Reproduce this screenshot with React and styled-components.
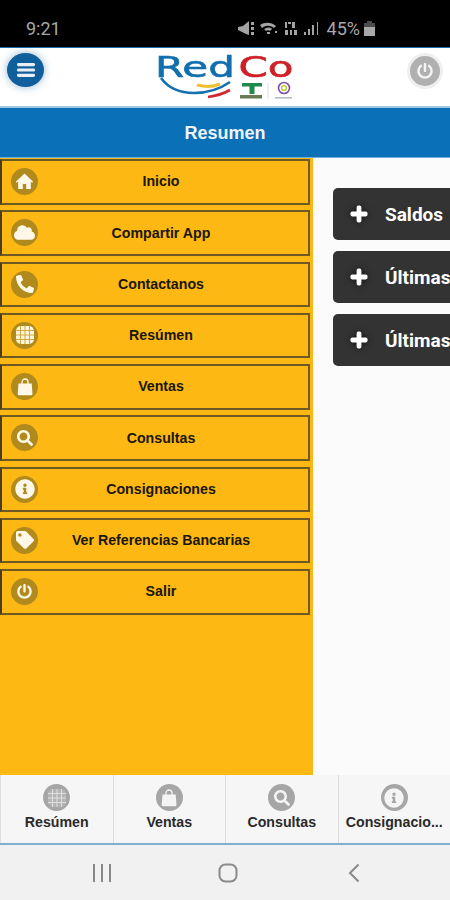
import React from 'react'
import styled, { createGlobalStyle } from 'styled-components'
import { FaCloud, FaPhone, FaSearch, FaInfoCircle, FaTag, FaPowerOff, FaPlus } from 'react-icons/fa'

const GridIcon = ({ cell, line }) => (
  <svg width="20" height="20" viewBox="0 0 20 20">
    <rect x="1" y="1" width="18" height="18" rx="5" fill={cell} />
    <path d="M5.5 1v18M10 1v18M14.5 1v18M1 5.5h18M1 10h18M1 14.5h18" stroke={line} strokeWidth="1" />
  </svg>
)

const HomeIcon = () => (
  <svg width="19" height="19" viewBox="0 0 18 18" fill="currentColor">
    <path d="M9 1.5L.8 9.2l1 1L3 9.2V16h4.4v-4.6h3.2V16H15V9.2l1.2 1 1-1z" />
  </svg>
)

const BagIcon = ({ size = 18 }) => (
  <svg width={size} height={size} viewBox="0 0 18 18" fill="currentColor">
    <path d="M2.5 5.5h13.2l.8 10.2a1.5 1.5 0 0 1-1.5 1.6H3.2a1.5 1.5 0 0 1-1.5-1.6z" />
    <path d="M6 7V4a3 3 0 0 1 6 0v3" fill="none" stroke="currentColor" strokeWidth="1.3" />
  </svg>
)

const menu = [
  { label: 'Inicio', icon: <HomeIcon /> },
  { label: 'Compartir App', icon: <FaCloud size={21} /> },
  { label: 'Contactanos', icon: <FaPhone size={18} style={{ transform: 'scaleX(-1)' }} /> },
  { label: 'Resúmen', icon: <GridIcon cell="#fff6dc" line="#cfa840" /> },
  { label: 'Ventas', icon: <BagIcon /> },
  { label: 'Consultas', icon: <FaSearch size={16} /> },
  { label: 'Consignaciones', icon: <FaInfoCircle size={20} /> },
  { label: 'Ver Referencias Bancarias', icon: <FaTag size={18} /> },
  { label: 'Salir', icon: <FaPowerOff size={15} /> },
]

const tabs = [
  { label: 'Resúmen', icon: <GridIcon cell="#b4b4b4" line="#dedede" /> },
  { label: 'Ventas', icon: <BagIcon /> },
  { label: 'Consultas', icon: <FaSearch size={16} /> },
  { label: 'Consignacio...', icon: <FaInfoCircle size={20} /> },
]

const buttons = ['Saldos', 'Últimas', 'Últimas']

export default function App() {
  return (
    <>
      <GlobalStyle />
      <Page>
        <StatusBar>
          <Clock>9:21</Clock>
          <StatusRight>
            <svg width="82" height="16" viewBox="0 0 82 16" fill="#a4a4a4">
              <path d="M0 6l5-1 6-5v14l-3-1-4-2-4-2zM13 1h3v3h-3zM13 6h3v3h-3zM13 11h3v3h-3z" />
              <path d="M22 4c5-3 11-3 16 1l-2 2c-4-3-8-3-12 0zM26 8c3-2 6-2 8 0l-2 2c-1-1-3-1-4 0zM29 11h3v2h-3zM37 10h2v2h-2z" />
              <path d="M47 1h2v6h-2zM50 1h3v2h-3zM54 1h3v6h-3zM47 9h3v5h-3zM52 9h2v5h-2zM56 9h3v5h-3z" />
              <path d="M66 11h2v3h-2zM70 8h2v6h-2zM74 4h2v10h-2zM79 1h1v13h-1z" />
            </svg>
            <Percent>45%</Percent>
            <svg width="11" height="15" viewBox="0 0 11 15" fill="#a8a8a8">
              <path d="M3 0h5v2h3v13H0V2h3z" opacity=".45" />
              <path d="M0 6h11v9H0z" />
            </svg>
          </StatusRight>
        </StatusBar>

        <Header>
          <MenuButton>
            <svg width="18" height="14" viewBox="0 0 18 14" fill="#e8eef3">
              <rect y="0" width="18" height="3.2" rx="1.4" />
              <rect y="5.4" width="18" height="3.2" rx="1.4" />
              <rect y="10.8" width="18" height="3.2" rx="1.4" />
            </svg>
          </MenuButton>
          <Logo>
            <LogoText>
              <LogoWord $color="#126fae">Red</LogoWord>
              <LogoWord $color="#cf2027">Co</LogoWord>
            </LogoText>
            <LogoArt width="140" height="26" viewBox="0 0 140 26" fill="none">
              <path d="M6 3c8 11 20 15 33 15 13 0 26-4 36-11" stroke="#1470b0" strokeWidth="2.6" />
              <path d="M42 10c8 2 16 2 23-1" stroke="#f0c030" strokeWidth="3" />
              <path d="M53 22c8-1 15-3 22-7" stroke="#d02a30" strokeWidth="2.6" />
              <path d="M87 8h20v3.5h-7.5V19h-5v-7.5H87z" fill="#1f8a4c" />
              <rect x="85" y="20" width="22" height="3.5" fill="#6b7a55" />
              <path d="M113 8v16" stroke="#ddd" />
              <circle cx="129" cy="13" r="5.5" stroke="#7b4fa8" strokeWidth="1.6" />
              <circle cx="129" cy="13" r="2.4" stroke="#b7c72e" strokeWidth="1.4" />
              <rect x="120" y="22" width="17" height="1.6" fill="#b6bdc4" />
            </LogoArt>
          </Logo>
          <PowerButton>
            <FaPowerOff size={16} />
          </PowerButton>
        </Header>

        <TitleBar>Resumen</TitleBar>

        <Body>
          <Sidebar>
            {menu.map(item => (
              <MenuRow key={item.label}>
                <RowIcon>{item.icon}</RowIcon>
                {item.label}
              </MenuRow>
            ))}
          </Sidebar>
          <Content>
            {buttons.map((label, index) => (
              <DarkButton key={index}>
                <Plus><FaPlus size={18} /></Plus>
                {label}
              </DarkButton>
            ))}
          </Content>
        </Body>

        <TabBar>
          {tabs.map(tab => (
            <Tab key={tab.label}>
              <TabIcon>{tab.icon}</TabIcon>
              <TabLabel>{tab.label}</TabLabel>
            </Tab>
          ))}
        </TabBar>

        <NavBar>
          <svg width="20" height="18" viewBox="0 0 20 18" fill="#8a8a8a">
            <rect x="1" y="0" width="2" height="18" />
            <rect x="9" y="0" width="2" height="18" />
            <rect x="17" y="0" width="2" height="18" />
          </svg>
          <svg width="20" height="20" viewBox="0 0 20 20" fill="none" stroke="#8a8a8a" strokeWidth="2">
            <rect x="1.5" y="1.5" width="17" height="17" rx="6" />
          </svg>
          <svg width="12" height="20" viewBox="0 0 12 20" fill="none" stroke="#8a8a8a" strokeWidth="2">
            <path d="M10.5 1.5L2 10l8.5 8.5" />
          </svg>
        </NavBar>
      </Page>
    </>
  )
}

const GlobalStyle = createGlobalStyle`
  html, body {
    margin: 0;
    padding: 0;
    background: #fff;
  }
  * {
    box-sizing: border-box;
  }
`
const Page = styled.div`
  width: 450px;
  height: 900px;
  display: flex;
  flex-direction: column;
  overflow: hidden;
  font-family: "Liberation Sans", Arial, sans-serif;
`
const StatusBar = styled.div`
  height: 48px;
  flex: none;
  background: #000;
  border-bottom: 1px solid #1a6ba8;
  display: flex;
  align-items: center;
  justify-content: space-between;
  padding: 10px 75px 0 26px;
  color: #a8a8a8;
`
const Clock = styled.div`
  font-family: Roboto, sans-serif;
  font-size: 18px;
`
const StatusRight = styled.div`
  display: flex;
  align-items: center;
  gap: 4px;
`
const Percent = styled.div`
  font-family: Roboto, sans-serif;
  font-size: 18px;
  margin-left: 3px;
`
const Header = styled.div`
  height: 60px;
  flex: none;
  background: #fff;
  border-bottom: 2px solid #9fc6e2;
  display: flex;
  align-items: flex-start;
  justify-content: space-between;
  padding: 5px 7px 0 7px;
`
const MenuButton = styled.div`
  width: 37px;
  height: 34px;
  border-radius: 50%;
  background: #0f5f9c;
  box-shadow: 0 0 8px rgba(15, 95, 156, 0.45);
  display: flex;
  align-items: center;
  justify-content: center;
`
const Logo = styled.div`
  position: relative;
  width: 140px;
  height: 50px;
  margin-left: -2px;
`
const LogoText = styled.div`
  display: flex;
  gap: 2.4px;
  font-family: "DejaVu Sans", sans-serif;
  font-size: 28px;
  line-height: 30px;
  width: 95px;
  transform: scaleX(1.5);
  transform-origin: left top;
  -webkit-text-stroke: 0.6px currentColor;
`
const LogoWord = styled.span`
  color: ${props => props.$color};
`
const LogoArt = styled.svg`
  position: absolute;
  left: 0;
  top: 22px;
`
const PowerButton = styled.div`
  width: 36px;
  height: 36px;
  border-radius: 50%;
  background: #b0b0b0;
  border: 3px solid #efefef;
  color: #f3f3f3;
  display: flex;
  align-items: center;
  justify-content: center;
`
const TitleBar = styled.div`
  height: 50px;
  flex: none;
  background: #0a70b8;
  border-bottom: 1px solid #6fb0dc;
  padding-top: 1px;
  color: #f0f4f8;
  font-weight: 700;
  font-size: 18px;
  display: flex;
  align-items: center;
  justify-content: center;
`
const Body = styled.div`
  height: 617px;
  flex: none;
  display: flex;
  background: #fbfbfb;
`
const Sidebar = styled.div`
  width: 313px;
  flex: none;
  background: #fdb813;
  display: flex;
  flex-direction: column;
  gap: 5.75px;
  padding-top: 1px;
`
const MenuRow = styled.div`
  position: relative;
  width: 310px;
  height: 45.5px;
  flex: none;
  border: 2px solid #6e5a22;
  border-left-color: #4a3d1c;
  background: #fdb813;
  display: flex;
  align-items: center;
  justify-content: center;
  padding: 0 0 1px 12px;
  font-weight: 700;
  font-size: 14.2px;
  color: #1a1608;
`
const RowIcon = styled.div`
  position: absolute;
  left: 9px;
  top: 7px;
  width: 27px;
  height: 27px;
  border-radius: 50%;
  background: #b08a1c;
  color: #fff8e8;
  display: flex;
  align-items: center;
  justify-content: center;
  overflow: hidden;
`
const Content = styled.div`
  flex: 1;
  padding: 30px 0 0 20px;
  display: flex;
  flex-direction: column;
  gap: 11px;
  overflow: hidden;
`
const DarkButton = styled.div`
  width: 140px;
  height: 52px;
  flex: none;
  background: #333;
  border-radius: 5px 0 0 5px;
  color: #fff;
  font-family: Roboto, sans-serif;
  font-weight: 700;
  font-size: 19px;
  display: flex;
  align-items: center;
  padding-left: 15px;
  gap: 15px;
  white-space: nowrap;
`
const Plus = styled.span`
  width: 22px;
  height: 22px;
  display: flex;
  align-items: center;
  justify-content: center;
  filter: drop-shadow(0 0 3px #111);

  svg {
    stroke: currentColor;
    stroke-width: 40px;
  }
`
const TabBar = styled.div`
  height: 70px;
  flex: none;
  background: #f6f6f6;
  border-bottom: 2px solid #7fb0cf;
  display: grid;
  grid-template-columns: repeat(4, 1fr);
`
const Tab = styled.div`
  border-left: 1px solid #dedede;
  display: flex;
  flex-direction: column;
  align-items: center;
  padding-top: 9px;
  gap: 3px;
`
const TabIcon = styled.div`
  width: 27px;
  height: 27px;
  border-radius: 50%;
  background: #a6a6a6;
  color: #f4f4f4;
  display: flex;
  align-items: center;
  justify-content: center;
  overflow: hidden;
`
const TabLabel = styled.div`
  font-weight: 700;
  font-size: 14.2px;
  color: #2a2a2a;
  white-space: nowrap;
`
const NavBar = styled.div`
  flex: 1;
  background: #f1f1f1;
  display: grid;
  grid-template-columns: 126px 130px auto;
  align-items: center;
  padding-left: 92px;
`
